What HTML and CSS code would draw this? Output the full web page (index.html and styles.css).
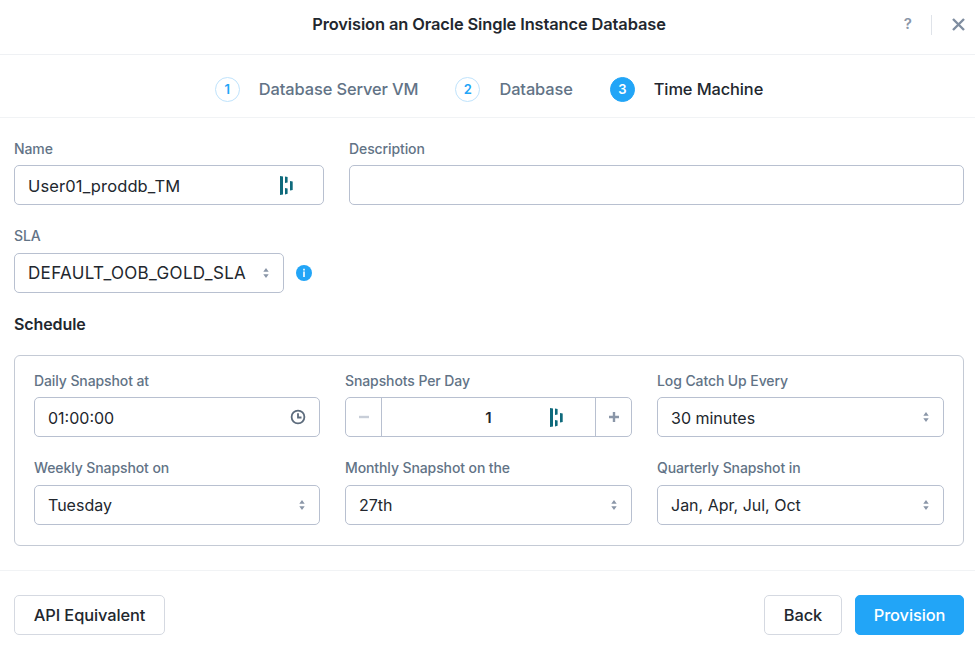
FILE: index.html
```html
<!DOCTYPE html>
<html lang="en">
<head>
<meta charset="utf-8">
<title>Provision an Oracle Single Instance Database</title>
<link rel="stylesheet" href="styles.css">
</head>
<body>
<svg class="defs" width="0" height="0" aria-hidden="true">
  <symbol id="dash" viewBox="0 0 13 19">
    <path d="M0 0l3 .5v18l-3 .5zM5 0.500l2.600.6v5.300l-2.600.5zM5 11.900l2.600.5v5.400l-2.600.6zM10 4.900l2.700.6v8.500l-2.700.5z"/>
  </symbol>
  <symbol id="updown" viewBox="0 0 6 12">
    <path d="M3 1l2.700 3.800h-5.400zM3 11l-2.700-3.800h5.400z"/>
  </symbol>
</svg>
<div class="modal">
  <header class="title-bar">
    <h1 class="title">Provision an Oracle Single Instance Database</h1>
    <div class="title-actions">
      <span class="help">?</span>
      <span class="divider"></span>
      <svg class="close" width="15" height="15" viewBox="0 0 15 15"><path d="M2 2l11 11M13 2L2 13"/></svg>
    </div>
  </header>
  <nav class="steps">
    <div class="step"><span class="step-num">1</span><span class="step-label">Database Server VM</span></div>
    <div class="step"><span class="step-num">2</span><span class="step-label">Database</span></div>
    <div class="step step-active"><span class="step-num">3</span><span class="step-label">Time Machine</span></div>
  </nav>
  <main class="form">
    <div class="row-top">
      <div class="field field-name">
        <label class="label label-tight">Name</label>
        <div class="box">
          <span class="value value-name">User01_proddb_TM</span>
          <svg class="dash dash-name"><use href="#dash"/></svg>
        </div>
      </div>
      <div class="field field-desc">
        <label class="label label-tight">Description</label>
        <div class="box"></div>
      </div>
    </div>
    <div class="field field-sla">
      <label class="label">SLA</label>
      <div class="sla-row">
        <div class="box box-sla">
          <span class="value value-sla">DEFAULT_OOB_GOLD_SLA</span>
          <svg class="updown"><use href="#updown"/></svg>
        </div>
        <svg class="info" width="16" height="16" viewBox="0 0 16 16"><circle cx="8" cy="8" r="8"/><path class="info-i" d="M7.200 3.800h1.600v1.600H7.200zM7.200 6.600h1.600v5.400H7.200z"/></svg>
      </div>
    </div>
    <h2 class="section">Schedule</h2>
    <section class="panel">
      <div class="field">
        <label class="label label-tight">Daily Snapshot at</label>
        <div class="box">
          <span class="value">01:00:00</span>
          <svg class="clock" width="16" height="16" viewBox="0 0 16 16"><circle cx="8" cy="8" r="6.400"/><path d="M8 4.200V8.500H11.500"/></svg>
        </div>
      </div>
      <div class="field">
        <label class="label label-tight">Snapshots Per Day</label>
        <div class="box stepper">
          <span class="stepper-btn stepper-minus"><svg width="12" height="12" viewBox="0 0 12 12"><path d="M1 6h10"/></svg></span>
          <span class="stepper-value"><b class="stepper-num">1</b><svg class="dash dash-step"><use href="#dash"/></svg></span>
          <span class="stepper-btn stepper-plus"><svg width="12" height="12" viewBox="0 0 12 12"><path d="M1 6h10M6 1v10"/></svg></span>
        </div>
      </div>
      <div class="field">
        <label class="label label-tight">Log Catch Up Every</label>
        <div class="box"><span class="value">30 minutes</span><svg class="updown"><use href="#updown"/></svg></div>
      </div>
      <div class="field">
        <label class="label">Weekly Snapshot on</label>
        <div class="box"><span class="value">Tuesday</span><svg class="updown"><use href="#updown"/></svg></div>
      </div>
      <div class="field">
        <label class="label">Monthly Snapshot on the</label>
        <div class="box"><span class="value">27th</span><svg class="updown"><use href="#updown"/></svg></div>
      </div>
      <div class="field">
        <label class="label">Quarterly Snapshot in</label>
        <div class="box"><span class="value">Jan, Apr, Jul, Oct</span><svg class="updown"><use href="#updown"/></svg></div>
      </div>
    </section>
  </main>
  <footer class="footer">
    <button class="btn btn-api">API Equivalent</button>
    <div class="footer-right">
      <button class="btn btn-back">Back</button>
      <button class="btn btn-primary">Provision</button>
    </div>
  </footer>
</div>
</body>
</html>
```

FILE: styles.css
```css
* { box-sizing: border-box; }
html, body { margin: 0; padding: 0; background: #fff; }
body { font-family: Inter, "Open Sans", "Liberation Sans", sans-serif; color: #22272e; width: 975px; height: 645px; overflow: hidden; }
.defs { position: absolute; }
.modal { display: flex; flex-direction: column; height: 645px; }

.title-bar { height: 55px; border-bottom: 1px solid #eff1f4; display: flex; align-items: center; justify-content: center; position: relative; padding: 0 0 6px 3px; }
.title { margin: 0; font-size: 16.4px; font-weight: 600; letter-spacing: -0.1px; color: #22272e; }
.title-actions { position: absolute; right: 9px; top: 15px; display: flex; align-items: center; height: 20px; }
.help { font-size: 15px; font-weight: 600; color: #8a96a8; margin: -3px 19px 0 0; }
.divider { width: 1px; height: 20px; background: #dfe3e9; margin-right: 19px; }
.close { display: block; fill: none; stroke: #7f8da0; stroke-width: 2.400; margin-top: -1px; }

.steps { height: 63px; border-bottom: 1px solid #f1f3f5; display: flex; justify-content: center; align-items: center; gap: 37px; padding: 6px 0 0 3px; }
.step { display: flex; align-items: center; gap: 19px; }
.step-num { width: 25px; height: 25px; border-radius: 50%; border: 1px solid #bfe3fc; color: #22a5f7; font-size: 13px; font-weight: 600; display: flex; align-items: center; justify-content: center; }
.step-label { font-size: 16.4px; font-weight: 500; color: #627386; letter-spacing: -0.1px; }
.step-active .step-num { background: #22a5f7; border-color: #22a5f7; color: #fff; }
.step-active .step-label { color: #22272e; }

.form { padding: 23px 11px 0 14px; flex: 1; }
.row-top { display: flex; gap: 25px; }
.field-name { width: 310px; }
.field-desc { flex: 1; }
.field-sla { margin-top: 23px; }
.sla-row { display: flex; align-items: center; gap: 12px; }
.label { display: block; height: 17px; line-height: 15px; margin-bottom: 8px; font-size: 14px; font-weight: 500; color: #627386; letter-spacing: -0.1px; }
.label-tight { margin-bottom: 7px; }
.label-tight + .box .value { margin-top: 2px; }
.box { height: 40px; border: 1px solid #b8c0d0; border-radius: 5px; display: flex; align-items: center; justify-content: space-between; padding: 0 13px; background: #fff; }
.box-sla { width: 270px; flex: none; }
.value { font-size: 16px; color: #22272e; }
.value-name { font-size: 16.5px; letter-spacing: 0.12px; }
.value-sla { font-size: 17px; letter-spacing: 0.35px; }
.dash { width: 13px; height: 19px; fill: #0f6a7c; display: block; }
.dash-name { margin-right: 17px; }
.updown { width: 6px; height: 12px; fill: #8a96a8; display: block; margin-right: 1px; }
.info { display: block; margin-top: -1px; }
.info circle { fill: #22a5f7; }
.info-i { fill: #fff; }
.clock { display: block; fill: none; stroke: #5c6b7c; stroke-width: 1.800; }

.section { margin: 22px 0 0; height: 19px; line-height: 19px; font-size: 16px; font-weight: 600; color: #22272e; letter-spacing: -0.1px; }

.panel { margin-top: 21px; height: 191px; border: 1px solid #c4cad5; border-radius: 6px; padding: 17px 19px 0; display: grid; grid-template-columns: 286px 287px 287px; gap: 23px 25px; align-content: start; }

.stepper { padding: 0; display: flex; justify-content: flex-start; }
.stepper-btn { width: 36px; flex: none; height: 100%; display: flex; align-items: center; justify-content: center; }
.stepper-btn svg { display: block; fill: none; stroke-width: 2.400; }
.stepper-minus { border-right: 1px solid #b8c0d0; }
.stepper-minus svg { stroke: #c8ced8; }
.stepper-plus { border-left: 1px solid #b8c0d0; }
.stepper-plus svg { stroke: #8a96a8; }
.stepper-value { flex: 1; display: flex; align-items: center; position: relative; height: 100%; justify-content: center; }
.stepper-num { font-size: 15px; font-weight: 600; color: #22272e; }
.dash-step { position: absolute; left: 168px; top: 10px; }

.footer { height: 75px; border-top: 1px solid #f1f3f5; padding: 24px 11px 0 14px; display: flex; justify-content: space-between; align-items: flex-start; }
.footer-right { display: flex; gap: 13px; }
.btn { height: 40px; border: 1px solid #d5d9e1; border-radius: 5px; background: #fff; font-family: inherit; font-size: 16.4px; font-weight: 500; color: #22272e; letter-spacing: -0.1px; padding: 0; }
.btn-api { width: 151px; }
.btn-back { width: 78px; }
.btn-primary { width: 109px; background: #22a5f7; border-color: #22a5f7; color: #fff; }
```
